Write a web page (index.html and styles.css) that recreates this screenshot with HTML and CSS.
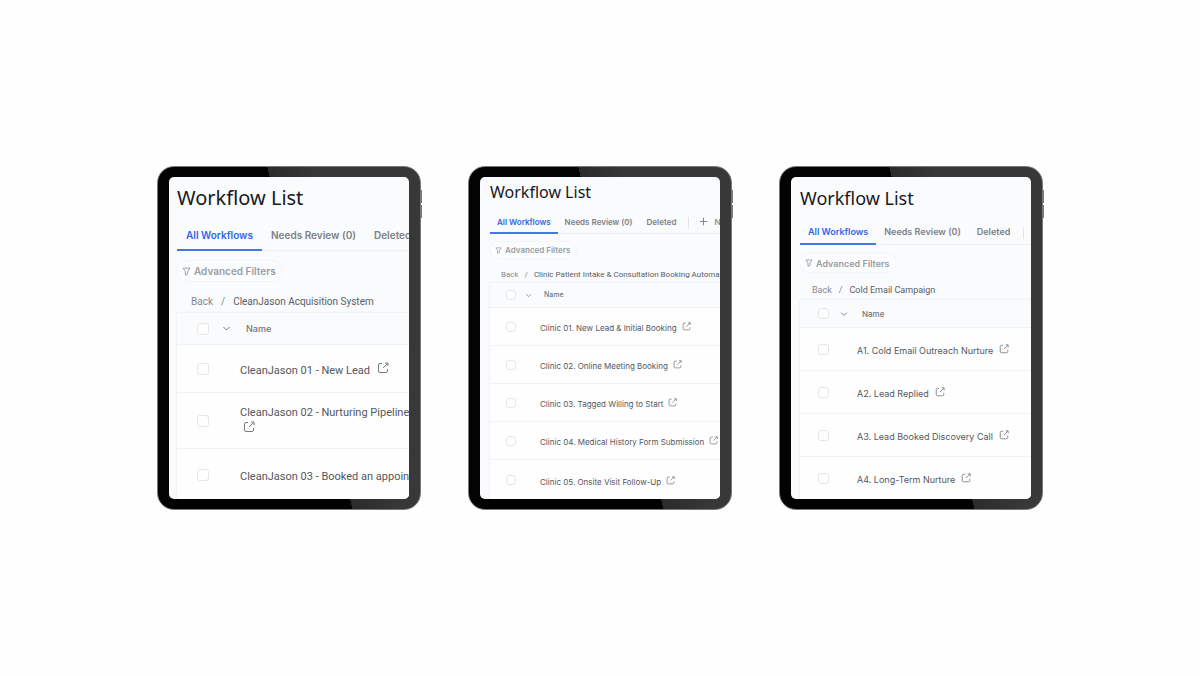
FILE: index.html
```
<!DOCTYPE html>
<html lang="en">
<head>
<meta charset="utf-8">
<meta name="viewport" content="width=device-width, initial-scale=1">
<title>Workflow List</title>
<link rel="stylesheet" href="styles.css">
</head>
<body>
<svg class="sprite" aria-hidden="true">
  <symbol id="open" viewBox="0 0 12 12"><path d="M5 1.500H3A1.500 1.500 0 0 0 1.500 3v6A1.500 1.500 0 0 0 3 10.500h6A1.500 1.500 0 0 0 10.500 9V7M6 6l4.700-4.700M8 1h3v3"/></symbol>
  <symbol id="funnel" viewBox="0 0 12 12"><path d="M1.500 1.500h9L7.500 6v3.500L4.500 11V6z"/></symbol>
  <symbol id="chevron" viewBox="0 0 12 12"><path d="m2 4 4 4 4-4"/></symbol>
  <symbol id="plus" viewBox="0 0 12 12"><path d="M6 1v10M1 6h10"/></symbol>
</svg>
<main class="stage">
  <section class="tablet tablet-large">
    <div class="screen">
      <h1 class="title">Workflow List</h1>
      <nav class="tabs">
        <button class="tab active">All Workflows</button>
        <button class="tab">Needs Review (0)</button>
        <button class="tab">Deleted</button>
      </nav>
      <button class="filters"><svg class="icon funnel"><use href="#funnel"/></svg>Advanced Filters</button>
      <div class="crumbs"><a href="#" class="back">Back</a><span class="slash">/</span><span>CleanJason Acquisition System</span></div>
      <table class="list">
        <thead><tr><th class="pick"><div class="pick-box"><input type="checkbox" aria-label="Select all"><svg class="icon chevron"><use href="#chevron"/></svg></div></th><th class="name">Name</th></tr></thead>
        <tbody>
          <tr><td class="pick"><input type="checkbox" aria-label="Select CleanJason 01"></td><td class="item"><a href="#">CleanJason 01 - New Lead<svg class="icon open"><use href="#open"/></svg></a></td></tr>
          <tr class="tall"><td class="pick"><input type="checkbox" aria-label="Select CleanJason 02"></td><td class="item wrapped"><a href="#">CleanJason 02 - Nurturing Pipeline<svg class="icon open below"><use href="#open"/></svg></a></td></tr>
          <tr><td class="pick"><input type="checkbox" aria-label="Select CleanJason 03"></td><td class="item"><a href="#">CleanJason 03 - Booked an appointment</a></td></tr>
        </tbody>
      </table>
    </div>
  </section>
  <section class="tablet tablet-small">
    <div class="screen">
      <h1 class="title">Workflow List</h1>
      <nav class="tabs">
        <button class="tab active">All Workflows</button>
        <button class="tab">Needs Review (0)</button>
        <button class="tab">Deleted</button>
        <span class="divider"></span>
        <button class="tab new"><svg class="icon plus"><use href="#plus"/></svg>N</button>
      </nav>
      <button class="filters"><svg class="icon funnel"><use href="#funnel"/></svg>Advanced Filters</button>
      <div class="crumbs"><a href="#" class="back">Back</a><span class="slash">/</span><span>Clinic Patient Intake &amp; Consultation Booking Automation</span></div>
      <table class="list">
        <thead><tr><th class="pick"><div class="pick-box"><input type="checkbox" aria-label="Select all"><svg class="icon chevron"><use href="#chevron"/></svg></div></th><th class="name">Name</th></tr></thead>
        <tbody>
          <tr><td class="pick"><input type="checkbox" aria-label="Select Clinic 01"></td><td class="item"><a href="#">Clinic 01. New Lead &amp; Initial Booking<svg class="icon open"><use href="#open"/></svg></a></td></tr>
          <tr><td class="pick"><input type="checkbox" aria-label="Select Clinic 02"></td><td class="item"><a href="#">Clinic 02. Online Meeting Booking<svg class="icon open"><use href="#open"/></svg></a></td></tr>
          <tr><td class="pick"><input type="checkbox" aria-label="Select Clinic 03"></td><td class="item"><a href="#">Clinic 03. Tagged Willing to Start<svg class="icon open"><use href="#open"/></svg></a></td></tr>
          <tr><td class="pick"><input type="checkbox" aria-label="Select Clinic 04"></td><td class="item"><a href="#">Clinic 04. Medical History Form Submission<svg class="icon open"><use href="#open"/></svg></a></td></tr>
          <tr><td class="pick"><input type="checkbox" aria-label="Select Clinic 05"></td><td class="item"><a href="#">Clinic 05. Onsite Visit Follow-Up<svg class="icon open"><use href="#open"/></svg></a></td></tr>
        </tbody>
      </table>
    </div>
  </section>
  <section class="tablet tablet-medium">
    <div class="screen">
      <h1 class="title">Workflow List</h1>
      <nav class="tabs">
        <button class="tab active">All Workflows</button>
        <button class="tab">Needs Review (0)</button>
        <button class="tab">Deleted</button>
        <span class="divider"></span>
      </nav>
      <button class="filters"><svg class="icon funnel"><use href="#funnel"/></svg>Advanced Filters</button>
      <div class="crumbs"><a href="#" class="back">Back</a><span class="slash">/</span><span>Cold Email Campaign</span></div>
      <table class="list">
        <thead><tr><th class="pick"><div class="pick-box"><input type="checkbox" aria-label="Select all"><svg class="icon chevron"><use href="#chevron"/></svg></div></th><th class="name">Name</th></tr></thead>
        <tbody>
          <tr><td class="pick"><input type="checkbox" aria-label="Select A1"></td><td class="item"><a href="#">A1. Cold Email Outreach Nurture<svg class="icon open"><use href="#open"/></svg></a></td></tr>
          <tr><td class="pick"><input type="checkbox" aria-label="Select A2"></td><td class="item"><a href="#">A2. Lead Replied<svg class="icon open"><use href="#open"/></svg></a></td></tr>
          <tr><td class="pick"><input type="checkbox" aria-label="Select A3"></td><td class="item"><a href="#">A3. Lead Booked Discovery Call<svg class="icon open"><use href="#open"/></svg></a></td></tr>
          <tr><td class="pick"><input type="checkbox" aria-label="Select A4"></td><td class="item"><a href="#">A4. Long-Term Nurture<svg class="icon open"><use href="#open"/></svg></a></td></tr>
        </tbody>
      </table>
    </div>
  </section>
</main>
</body>
</html>
```
FILE: styles.css
```
* { box-sizing: border-box; }
body {
  margin: 0;
  background: #fefefe;
  font-family: Inter, "Liberation Sans", sans-serif;
  color: #53575e;
}
button { margin: 0; border: 0; background: none; font: inherit; color: inherit; }
a { color: inherit; text-decoration: none; }
.sprite { position: absolute; width: 0; height: 0; }
.icon { flex: none; fill: none; stroke: currentColor; }

.stage {
  min-height: 100vh;
  display: flex;
  flex-wrap: wrap;
  align-items: center;
  align-content: center;
  justify-content: center;
  gap: 47px;
}

/* Device frame */
.tablet {
  position: relative;
  width: 264px;
  height: 344px;
  padding: 10px 11px;
  border: 1px solid #77797b;
  border-radius: 17px;
  background: linear-gradient(76deg, #030303 0 56%, #2b2b2b 56%, #383838 70%);
}
.tablet::before,
.tablet::after {
  content: "";
  position: absolute;
  right: -2px;
  width: 1px;
  height: 13px;
  background: #77797b;
}
.tablet::before { top: 23px; }
.tablet::after { top: 38px; }
.screen {
  height: 100%;
  padding-left: var(--inset);
  overflow: hidden;
  border-radius: 5px;
  background: #f9fbfd;
  white-space: nowrap;
}

.tablet-large {
  --inset: 8px; --title: 20px; --title-line: 42px; --title-gap: 2px;
  --tab: 10px; --tab-height: 30px; --tab-pad: 9px;
  --filter: 10px; --filter-height: 20px; --filter-gap: 10px;
  --crumb: 10px; --crumb-height: 24px; --crumb-gap: 8px; --crumb-pad: 14px; --slash: 8px;
  --pick: 63px; --pick-pad: 20px; --box: 12px; --head: 32px; --row: 48px; --last-row: 52px;
  --text: 11px; --name: 9px; --name-pad: 6px; --icon: 12px; --icon-gap: 7px; --small: 9px; --chevron-gap: 13px;
  --item-font: Roboto;
}
.tablet-small {
  --inset: 10px; --title: 16px; --title-line: 30px; --title-gap: 4px;
  --tab: 8px; --tab-height: 23px; --tab-pad: 7px;
  --filter: 8px; --filter-height: 16px; --filter-gap: 8px;
  --crumb: 8px; --crumb-height: 18px; --crumb-gap: 7px; --crumb-pad: 11px; --slash: 6px;
  --pick: 50px; --pick-pad: 16px; --box: 10px; --head: 25px; --row: 38px; --last-row: 40px;
  --text: 8px; --name: 7px; --name-pad: 4px; --icon: 9px; --icon-gap: 5px; --small: 7px; --chevron-gap: 9px;
  --item-font: Inter;
}
.tablet-medium {
  --inset: 9px; --title: 18px; --title-line: 43px; --title-gap: 0px;
  --tab: 9px; --tab-height: 25px; --tab-pad: 8px;
  --filter: 9px; --filter-height: 18px; --filter-gap: 9px;
  --crumb: 9px; --crumb-height: 20px; --crumb-gap: 8px; --crumb-pad: 12px; --slash: 7px;
  --pick: 57px; --pick-pad: 18px; --box: 11px; --head: 28px; --row: 43px; --last-row: 43px;
  --text: 9px; --name: 8px; --name-pad: 5px; --icon: 10px; --icon-gap: 6px; --small: 8px; --chevron-gap: 11px;
  --item-font: Inter;
}

.title {
  margin: 0 0 var(--title-gap);
  font: 400 var(--title)/var(--title-line) "Noto Sans", "Open Sans", sans-serif;
  color: #17191c;
}
.tabs {
  display: flex;
  align-items: center;
  height: var(--tab-height);
  box-shadow: inset 0 -1px #eceff2;
  font-size: var(--tab);
  font-weight: 600;
  color: #7d8186;
}
.tab {
  flex: none;
  align-self: stretch;
  display: flex;
  align-items: center;
  padding: 0 var(--tab-pad);
  border-bottom: 2px solid transparent;
}
.tab.active { color: #2f66ea; border-color: #4677e8; }
.tab.new { gap: 6px; font-weight: 500; }
.divider { flex: none; width: 1px; height: 12px; margin: 0 3px 0 5px; background: #e3e6e9; }
.plus { width: 9px; height: 9px; stroke-width: 1.3; }

.filters {
  display: flex;
  align-items: center;
  gap: 3px;
  height: var(--filter-height);
  margin-top: var(--filter-gap);
  padding: 0 6px 0 5px;
  border-radius: 10px;
  background: #fbfcfd;
  box-shadow: 0 0 0 1px #f3f5f7;
  font-size: var(--filter);
  font-weight: 600;
  color: #9a9da1;
}
.funnel { width: var(--small); height: var(--small); stroke-width: 1.3; }

.crumbs {
  display: flex;
  align-items: center;
  height: var(--crumb-height);
  margin-top: var(--crumb-gap);
  padding-left: var(--crumb-pad);
  font-family: Roboto, "Noto Sans", sans-serif;
  font-size: var(--crumb);
  color: #5a5e64;
}
.back { color: #85898e; }
.slash { margin: 0 var(--slash); color: #85898e; }

/* Workflow table */
.list {
  width: 100%;
  table-layout: fixed;
  border-collapse: separate;
  border-spacing: 0;
  background: #fefefe;
  box-shadow: 0 0 2px #dfe3e6;
}
.list th, .list td {
  height: var(--row);
  padding: 0;
  border-bottom: 1px solid #f0f2f3;
  text-align: left;
  vertical-align: middle;
  font-size: var(--text);
  line-height: 16px;
}
.list th {
  height: var(--head);
  background: #f9fbfc;
  font-size: var(--name);
  font-weight: 500;
  color: #72767b;
}
.list .item { padding-top: 3px; font-family: var(--item-font), sans-serif; }
.list .wrapped { padding: 0 0 3px; }
.list .tall td { height: 56px; }
.list tbody tr:last-child td { height: var(--last-row); border-bottom: 0; }
.list .pick { width: var(--pick); padding-left: var(--pick-pad); }
.list .name { padding-left: var(--name-pad); }
.pick-box { display: flex; align-items: center; gap: var(--chevron-gap); }
.list input {
  appearance: none;
  display: block;
  width: var(--box);
  height: var(--box);
  margin: 0;
  border: 1px solid #e4e6e8;
  border-radius: 3px;
  background: #fefefe;
}
.chevron { width: var(--small); height: var(--small); stroke-width: 1.3; }
.open { width: var(--icon); height: var(--icon); margin-left: var(--icon-gap); stroke-width: 1; color: #777b80; }
.open.below { display: block; margin-left: 3px; }
```
